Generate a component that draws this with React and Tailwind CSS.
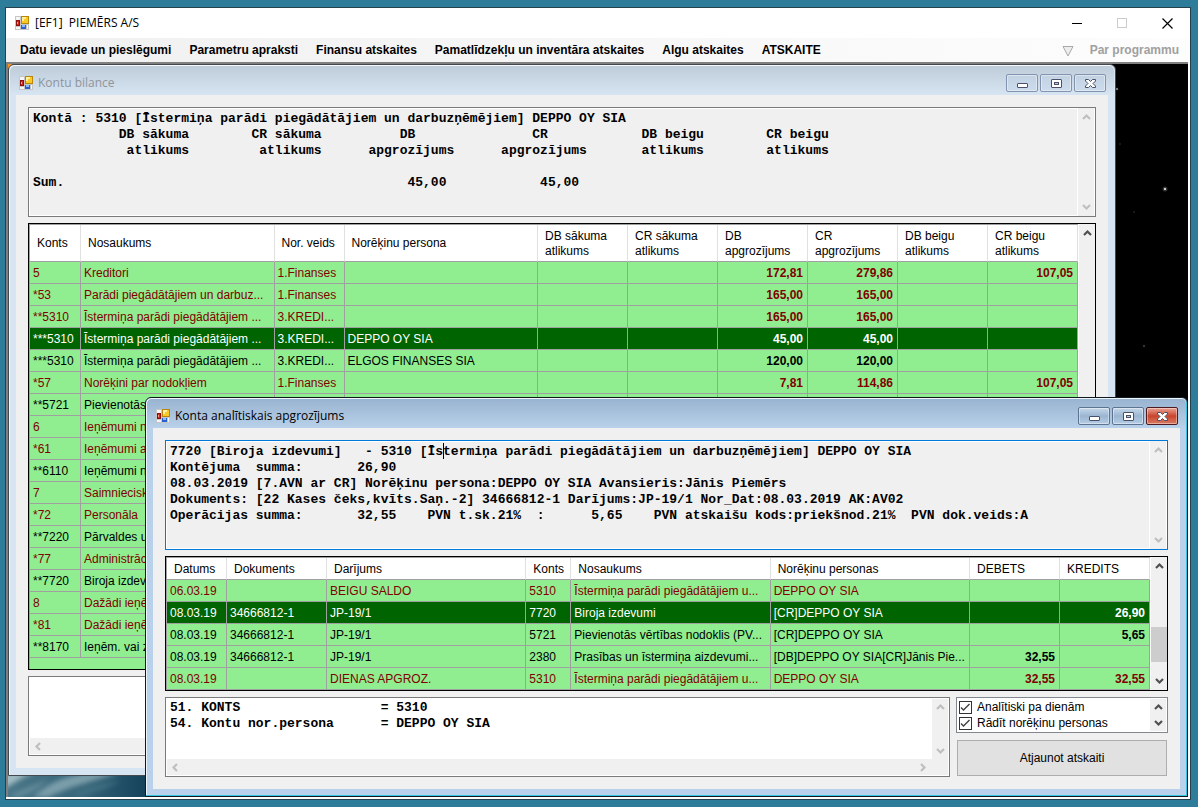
import React from 'react';

const RED = 'red';
const BLACK = 'black';
const SELECTED = 'selected';

const ROW_STYLE = {
  red:      'bg-[#90ee90] text-[#800000]',
  black:    'bg-[#90ee90] text-black',
  selected: 'bg-[#006400] text-white',
};

const MENU = [
  'Datu ievade un pieslēgumi',
  'Parametru apraksti',
  'Finansu atskaites',
  'Pamatlīdzekļu un inventāra atskaites',
  'Algu atskaites',
  'ATSKAITE',
];

const BALANCE_COLUMNS = [
  { label: 'Konts',               width: 'w-[51px]' },
  { label: 'Nosaukums',           width: '' },
  { label: 'Nor. veids',          width: 'w-[70px]' },
  { label: 'Norēķinu persona',    width: '' },
  { label: 'DB sākuma atlikums',  width: 'w-[90px]', num: true },
  { label: 'CR sākuma atlikums',  width: 'w-[90px]', num: true },
  { label: 'DB apgrozījums',      width: 'w-[90px]', num: true },
  { label: 'CR apgrozījums',      width: 'w-[90px]', num: true },
  { label: 'DB beigu atlikums',   width: 'w-[90px]', num: true },
  { label: 'CR beigu atlikums',   width: 'w-[90px]', num: true },
];

const BALANCE_ROWS = [
  { tone: RED,      cells: ['5', 'Kreditori', '1.Finanses', '', '', '', '172,81', '279,86', '', '107,05'] },
  { tone: RED,      cells: ['*53', 'Parādi piegādātājiem un darbuz...', '1.Finanses', '', '', '', '165,00', '165,00', '', ''] },
  { tone: RED,      cells: ['**5310', 'Īstermiņa parādi piegādātājiem ...', '3.KREDI...', '', '', '', '165,00', '165,00', '', ''] },
  { tone: SELECTED, cells: ['***5310', 'Īstermiņa parādi piegādātājiem ...', '3.KREDI...', 'DEPPO OY SIA', '', '', '45,00', '45,00', '', ''] },
  { tone: BLACK,    cells: ['***5310', 'Īstermiņa parādi piegādātājiem ...', '3.KREDI...', 'ELGOS FINANSES SIA', '', '', '120,00', '120,00', '', ''] },
  { tone: RED,      cells: ['*57', 'Norēķini par nodokļiem', '1.Finanses', '', '', '', '7,81', '114,86', '', '107,05'] },
  { tone: BLACK,    cells: ['**5721', 'Pievienotās', '', '', '', '', '', '', '', ''] },
  { tone: RED,      cells: ['6', 'Ieņēmumi no', '', '', '', '', '', '', '', ''] },
  { tone: RED,      cells: ['*61', 'Ieņēmumi a', '', '', '', '', '', '', '', ''] },
  { tone: BLACK,    cells: ['**6110', 'Ieņēmumi no', '', '', '', '', '', '', '', ''] },
  { tone: RED,      cells: ['7', 'Saimniecisk', '', '', '', '', '', '', '', ''] },
  { tone: RED,      cells: ['*72', 'Personāla', '', '', '', '', '', '', '', ''] },
  { tone: BLACK,    cells: ['**7220', 'Pārvaldes u', '', '', '', '', '', '', '', ''] },
  { tone: RED,      cells: ['*77', 'Administrāc', '', '', '', '', '', '', '', ''] },
  { tone: BLACK,    cells: ['**7720', 'Biroja izdev', '', '', '', '', '', '', '', ''] },
  { tone: RED,      cells: ['8', 'Dažādi ieņē', '', '', '', '', '', '', '', ''] },
  { tone: RED,      cells: ['*81', 'Dažādi ieņē', '', '', '', '', '', '', '', ''] },
  { tone: BLACK,    cells: ['**8170', 'Ieņēm. vai z', '', '', '', '', '', '', '', ''] },
];

const TURNOVER_COLUMNS = [
  { label: 'Datums',            width: 'w-[60px]' },
  { label: 'Dokuments',         width: 'w-[100px]' },
  { label: 'Darījums',          width: '' },
  { label: 'Konts',             width: 'w-[45px]' },
  { label: 'Nosaukums',         width: '' },
  { label: 'Norēķinu personas', width: '' },
  { label: 'DEBETS',            width: 'w-[90px]', num: true },
  { label: 'KREDITS',           width: 'w-[90px]', num: true },
];

const TURNOVER_ROWS = [
  { tone: RED,      cells: ['06.03.19', '', 'BEIGU SALDO', '5310', 'Īstermiņa parādi piegādātājiem u...', 'DEPPO OY SIA', '', ''] },
  { tone: SELECTED, cells: ['08.03.19', '34666812-1', 'JP-19/1', '7720', 'Biroja izdevumi', '[CR]DEPPO OY SIA', '', '26,90'] },
  { tone: BLACK,    cells: ['08.03.19', '34666812-1', 'JP-19/1', '5721', 'Pievienotās vērtības nodoklis (PV...', '[CR]DEPPO OY SIA', '', '5,65'] },
  { tone: BLACK,    cells: ['08.03.19', '34666812-1', 'JP-19/1', '2380', 'Prasības un īstermiņa aizdevumi...', '[DB]DEPPO OY SIA[CR]Jānis Pie...', '32,55', ''] },
  { tone: RED,      cells: ['08.03.19', '', 'DIENAS APGROZ.', '5310', 'Īstermiņa parādi piegādātājiem u...', 'DEPPO OY SIA', '32,55', '32,55'] },
];

// [column, text] pairs set out on one line of fixed-width text
const line = (...parts) => parts.reduce((out, [col, text]) => out.padEnd(col) + text, '');

const BALANCE_INFO = [
  'Kontā : 5310 [Īstermiņa parādi piegādātājiem un darbuzņēmējiem] DEPPO OY SIA',
  line([11, 'DB sākuma'], [28, 'CR sākuma'], [47, 'DB'], [64, 'CR'], [78, 'DB beigu'], [94, 'CR beigu']),
  line([12, 'atlikums'], [29, 'atlikums'], [43, 'apgrozījums'], [60, 'apgrozījums'], [78, 'atlikums'], [94, 'atlikums']),
  '',
  line([0, 'Sum.'], [48, '45,00'], [65, '45,00']),
].join('\n');

const TURNOVER_INFO = [
  line([0, '7720 [Biroja izdevumi]'], [25, '- 5310 [Īstermiņa parādi piegādātājiem un darbuzņēmējiem] DEPPO OY SIA']),
  line([0, 'Kontējuma  summa:'], [24, '26,90']),
  '08.03.2019 [7.AVN ar CR] Norēķinu persona:DEPPO OY SIA Avansieris:Jānis Piemērs',
  'Dokuments: [22 Kases čeks,kvīts.Saņ.-2] 34666812-1 Darījums:JP-19/1 Nor_Dat:08.03.2019 AK:AV02',
  line([0, 'Operācijas summa:'], [24, '32,55'], [33, 'PVN t.sk.21%'], [47, ':'], [54, '5,65'], [62, 'PVN atskaišu kods:priekšnod.21%'], [95, 'PVN dok.veids:A']),
].join('\n');

const FILTER_INFO = [
  line([0, '51. KONTS'], [27, '= 5310']),
  line([0, '54. Kontu nor.persona'], [27, '= DEPPO OY SIA']),
].join('\n');

function AppIcon() {
  return (
    <svg width="14" height="14" viewBox="0 0 14 14" className="shrink-0" aria-hidden="true" shapeRendering="crispEdges">
      <path d="M0 0h14v14H0z" fill="#c6c6c6" />
      <path d="M1 1h4v3H1zM1 11h4v2H1zM12 9h1v4h-1z" fill="#f6f6f6" />
      <path d="M6 0h8v8H6z" fill="#b8860b" />
      <path d="M7 1h6v6H7z" fill="#fbc926" />
      <path d="M7 1h4v2H9v2H7z" fill="#fff0a0" />
      <path d="M1 4h4v6H1z" fill="#8c1010" />
      <path d="M2 5h2v4H2z" fill="#cf2a1c" />
      <path d="M2 6h1v2H2z" fill="#f2a094" />
      <path d="M6 9h5v4H6z" fill="#2860d0" />
      <path d="M7 9h3v2H7z" fill="#8ab8ff" />
    </svg>
  );
}

const CHEVRONS = {
  up:    'M1 6 4.5 2.5 8 6',
  down:  'M1 3 4.5 6.5 8 3',
  left:  'M6 1 2.5 4.5 6 8',
  right: 'M3 1 6.5 4.5 3 8',
};

function Chevron({ dir, dim }) {
  return (
    <svg width="9" height="9" viewBox="0 0 9 9" fill="none" stroke={dim ? '#bfbfbf' : '#505050'} strokeWidth="2.2" aria-hidden="true">
      <path d={CHEVRONS[dir]} />
    </svg>
  );
}

// Vertical scroll bar, with an optional thumb near its lower end
function ScrollBar({ dim, thumb, className = 'w-4' }) {
  return (
    <div className={`flex shrink-0 flex-col items-center justify-between bg-[#f0f0f0] ${className}`}>
      <Chevron dir="up" dim={dim} />
      {thumb && <div className="mt-auto mb-[14px] h-[35px] w-full bg-[#cdcdcd]" />}
      <Chevron dir="down" dim={dim} />
    </div>
  );
}

const GLYPHS = {
  minimize: <rect x="1.5" y="5.5" width="10" height="4" rx="0.5" fill="#fff" stroke="#4a5068" />,
  restore: (
    <g fill="#fff" stroke="#4a5068">
      <rect x="1.5" y="1.5" width="10" height="8" rx="0.5" />
      <rect x="4.5" y="4.5" width="4" height="2" fill="#bcccdc" />
    </g>
  ),
  close: (
    <path
      d="M1.5 1.5h3l2 2 2-2h3V3L9 5.5 11.5 8v1.5h-3l-2-2-2 2h-3V8L4 5.5 1.5 3z"
      fill="#fff" stroke="#4a5068"
    />
  ),
};

function CaptionButton({ kind, label, active }) {
  const tone = !active
    ? 'border-[#8394b0] bg-linear-to-b from-[#c3d2e2] to-[#cddcec]'
    : kind === 'close'
      ? 'border-[#4c1a20] bg-linear-to-b from-[#e8a294] via-[#c8442c] via-50% to-[#d87a60]'
      : 'border-[#5d7390] bg-linear-to-b from-[#c6d8ea] via-[#9bb5d1] via-50% to-[#b5cde6]';
  return (
    <button
      type="button" aria-label={label}
      className={`flex h-[18px] w-8 items-center justify-center rounded-[2px] border shadow-[inset_0_0_0_1px_rgba(255,255,255,0.4)] ${tone}`}
    >
      <svg width="13" height="11" viewBox="0 0 13 11" aria-hidden="true">{GLYPHS[kind]}</svg>
    </button>
  );
}

function ChildWindow({ title, active, className, children }) {
  return (
    <section
      className={`absolute flex flex-col rounded-t-[6px] border px-[7px] pb-[7px] ${
        active
          ? 'border-[#101820] bg-[#b9d1ea] shadow-[inset_-1px_-1px_0_#35c5e0,inset_1px_1px_0_#eef5fc]'
          : 'border-[#45484d] bg-[#d7e4f2] shadow-[inset_1px_1px_0_#f4f8fc]'
      } ${className}`}
    >
      <header
        className={`-mx-[6px] mt-px flex h-[29px] shrink-0 items-start rounded-t-[5px] bg-linear-to-b pl-[9px] pr-2 ${
          active ? 'from-[#99b4d1] to-[#b9d1ea]' : 'from-[#bfcddb] to-[#d7e4f2]'
        }`}
      >
        <div className="flex h-[29px] items-center gap-[5px] pt-[5px]">
          <AppIcon />
          <h2 className={`font-['Open_Sans',sans-serif] text-[12px] leading-4 ${active ? 'text-black' : 'text-[#8f959c]'}`}>{title}</h2>
        </div>
        <div className="ml-auto flex gap-[2px] pt-2">
          <CaptionButton kind="minimize" label="Minimizēt" active={active} />
          <CaptionButton kind="restore" label="Atjaunot" active={active} />
          <CaptionButton kind="close" label="Aizvērt" active={active} />
        </div>
      </header>
      <div className="flex min-h-0 flex-1 flex-col gap-[6px] bg-[#f0f0f0] p-3">{children}</div>
    </section>
  );
}

function Memo({ label, value, className = 'px-1 pt-[3px]' }) {
  return (
    <textarea
      readOnly wrap="off" spellCheck={false} aria-label={label} defaultValue={value}
      className={`block min-w-0 flex-1 resize-none overflow-hidden font-['Liberation_Mono',monospace] text-[13px] leading-4 font-bold whitespace-pre text-black outline-none ${className}`}
    />
  );
}

function DataGrid({ columns, rows, headHeight, className, thumb }) {
  return (
    <div className={`flex border border-black bg-[#90ee90] ${className}`}>
      <div className="min-w-0 flex-1 overflow-hidden border-t border-l border-[#a0a0a0]">
        <table className="w-full table-fixed border-separate border-spacing-0 text-[12px] leading-[15px]">
          <thead>
            <tr className={headHeight}>
              {columns.map(c => (
                <th
                  key={c.label} scope="col"
                  className={`border-r border-b border-r-[#e0e0e0] border-b-[#a0a0a0] bg-white pt-px pl-[7px] text-left align-middle font-normal ${c.width}`}
                >
                  {c.label}
                </th>
              ))}
            </tr>
          </thead>
          <tbody>
            {rows.map((row, i) => (
              <tr key={i} className={`h-[22px] ${ROW_STYLE[row.tone]}`}>
                {row.cells.map((cell, j) => (
                  <td
                    key={j}
                    className={`border-r border-b border-[#a0a0a0] pt-[2px] pl-[3px] align-middle whitespace-nowrap ${columns[j].num ? 'pr-1 text-right font-bold' : ''}`}
                  >
                    {cell}
                  </td>
                ))}
              </tr>
            ))}
          </tbody>
        </table>
      </div>
      <ScrollBar thumb={thumb} className="w-[17px] border-l border-white py-[5px]" />
    </div>
  );
}

function CheckItem({ label }) {
  return (
    <label className="flex h-4 items-center gap-[5px] leading-4">
      <span className="relative flex h-[13px] w-[13px] shrink-0">
        <input type="checkbox" defaultChecked className="peer h-[13px] w-[13px] appearance-none border border-[#333] bg-white" />
        <svg width="13" height="13" viewBox="0 0 13 13" className="pointer-events-none absolute inset-0 hidden peer-checked:block" fill="none" stroke="#404040" strokeWidth="1.4" aria-hidden="true">
          <path d="M2 6.5 4.5 9l6-6" />
        </svg>
      </span>
      {label}
    </label>
  );
}

function TitleBar() {
  return (
    <header className="flex h-[30px] shrink-0 items-center bg-white pl-[9px] pr-[17px]">
      <AppIcon />
      <h1 className="ml-[6px] font-['Open_Sans',sans-serif] text-[12px] leading-4 whitespace-pre">{'[EF1]  PIEMĒRS A/S'}</h1>
      <div className="ml-auto flex gap-[34px]">
        <button type="button" aria-label="Minimizēt">
          <svg width="11" height="11" viewBox="0 0 11 11" shapeRendering="crispEdges"><path d="M0 5.5h10" stroke="#000" /></svg>
        </button>
        <button type="button" aria-label="Maksimizēt" disabled>
          <svg width="11" height="11" viewBox="0 0 11 11" shapeRendering="crispEdges"><path d="M.5.5h9v9h-9z" fill="none" stroke="#ccc" /></svg>
        </button>
        <button type="button" aria-label="Aizvērt">
          <svg width="11" height="11" viewBox="0 0 11 11"><path d="m.5.5 10 10m0-10-10 10" stroke="#000" strokeWidth="1.2" /></svg>
        </button>
      </div>
    </header>
  );
}

function MenuBar() {
  return (
    <nav className="flex h-6 shrink-0 items-center bg-linear-to-r from-[#f0f0f0] to-[#fdfdfd] pl-[14px] pr-[11px] text-[12px] leading-4 font-bold">
      <div className="flex gap-[18px]">
        {MENU.map(item => (
          <button key={item} type="button" className="whitespace-nowrap">{item}</button>
        ))}
      </div>
      <div className="ml-auto flex items-center gap-4 text-[#a0a0a0]">
        <svg width="12" height="11" viewBox="0 0 12 11" className="mt-[3px]" aria-hidden="true">
          <path d="M1 .5h10L6 10z" fill="#ededed" stroke="#a8a8a8" />
        </svg>
        <button type="button" className="whitespace-nowrap">Par programmu</button>
      </div>
    </nav>
  );
}

// Night sky with the lit edge of the planet in the lower left corner
function Wallpaper() {
  return (
    <>
      <svg className="absolute bottom-0 left-0" width="240" height="22" viewBox="0 0 240 22" aria-hidden="true">
        <defs>
          <linearGradient id="sea" x1="0" x2="1">
            <stop offset="0" stopColor="#4a7688" />
            <stop offset="0.3" stopColor="#366579" />
            <stop offset="0.6" stopColor="#123f59" />
            <stop offset="1" stopColor="#000" />
          </linearGradient>
          <filter id="soft"><feGaussianBlur stdDeviation="2.5" /></filter>
        </defs>
        <path d="M0 0h240v22H0z" fill="url(#sea)" />
        <g filter="url(#soft)">
          <path d="M-4 14C6 8 12 3 26-2H-4z" fill="#a3bcc2" />
          <path d="M24 22C36 14 46 3 78-2h34C86 6 60 12 40 22z" fill="#7c9eaa" />
          <path d="M2 20C14 16 26 10 40 4 30 14 18 20 8 22z" fill="#6a909e" />
          <path d="M62 20C76 12 92 8 112 6 98 14 82 18 72 22z" fill="#416f82" />
        </g>
      </svg>
      <svg className="absolute top-0 left-0" width="5" height="5" viewBox="0 0 5 5" aria-hidden="true">
        <path d="M0 0h5L0 5z" fill="#f7941d" />
      </svg>
      <svg className="absolute top-0 right-0" width="72" height="300" viewBox="0 0 72 300" aria-hidden="true">
        <circle cx="49" cy="125" r="2.5" fill="#333" />
        <circle cx="49" cy="125" r="1" fill="#fff" />
        <circle cx="1" cy="25" r="1.2" fill="#777" />
        <circle cx="4" cy="80" r="1" fill="#222" />
        <circle cx="18" cy="148" r="1" fill="#222" />
        <circle cx="28" cy="282" r="1.2" fill="#333" />
      </svg>
    </>
  );
}

function BalanceWindow() {
  return (
    <ChildWindow title="Kontu bilance" className="top-0 right-[72px] bottom-[21px] left-0">
      <div className="flex h-[110px] shrink-0 border border-[#7a7a7a] bg-[#f0f0f0] shadow-[inset_0_0_0_1px_#fff]">
        <Memo label="Konta kopsavilkums" value={BALANCE_INFO} />
        <ScrollBar dim className="mr-px w-[17px] border-l border-white py-[5px]" />
      </div>
      <DataGrid columns={BALANCE_COLUMNS} rows={BALANCE_ROWS} headHeight="h-[37px]" className="min-h-0 flex-1" />
      <div className="flex h-20 shrink-0 flex-col border border-[#7a7a7a] bg-white p-px">
        <Memo label="Atlases nosacījumi" value="" />
        <div className="flex h-4 items-center bg-[#f0f0f0] pl-1"><Chevron dir="left" dim /></div>
      </div>
    </ChildWindow>
  );
}

function TurnoverWindow() {
  return (
    <ChildWindow title="Konta analītiskais apgrozījums" active className="right-0 bottom-0 left-[137px] top-[333px]">
      <div className="relative flex h-[110px] shrink-0 border border-[#0078d7] bg-[#f0f0f0] shadow-[inset_0_0_0_1px_#fff]">
        <Memo label="Kontējuma dati" value={TURNOVER_INFO} />
        <ScrollBar dim className="mr-px w-[17px] border-l border-white py-[5px]" />
        <span className="absolute top-[2px] left-[277px] h-4 w-px bg-black" />
      </div>
      <DataGrid columns={TURNOVER_COLUMNS} rows={TURNOVER_ROWS} headHeight="h-[22px]" className="min-h-0 flex-1" thumb />
      <div className="flex h-20 shrink-0 gap-[6px]">
        <div className="flex min-w-0 flex-1 flex-col border border-[#7a7a7a] bg-white p-px">
          <div className="flex min-h-0 flex-1">
            <Memo label="Atlases nosacījumi" value={FILTER_INFO} className="px-[3px] pt-px" />
            <ScrollBar dim className="w-4 py-1" />
          </div>
          <div className="flex h-4 items-center justify-between bg-[#f0f0f0] pr-[21px] pl-1">
            <Chevron dir="left" dim />
            <Chevron dir="right" dim />
          </div>
        </div>
        <div className="flex w-[212px] shrink-0 flex-col justify-between text-[12px]">
          <div className="flex h-9 border border-[#828790] bg-white p-px">
            <div className="flex flex-1 flex-col pl-px">
              <CheckItem label="Analītiski pa dienām" />
              <CheckItem label="Rādīt norēķinu personas" />
            </div>
            <ScrollBar className="w-4 py-1" />
          </div>
          <button type="button" className="mx-px mb-px h-9 border border-[#adadad] bg-[#e1e1e1]">Atjaunot atskaiti</button>
        </div>
      </div>
    </ChildWindow>
  );
}

export default function App() {
  return (
    <div className="flex h-screen min-h-[640px] bg-[#2d7c9a] pt-[7px] pr-[7px] pb-[7px] pl-[5px] font-['Liberation_Sans',sans-serif] text-black">
      <div className="flex min-w-0 flex-1 flex-col border border-[#24414d] bg-white">
        <TitleBar />
        <MenuBar />
        <main className="mr-[2px] mb-[2px] flex min-h-0 flex-1 border-t-2 border-l-2 border-t-[#808080] border-l-[#808080] bg-black">
          <div className="relative min-w-0 flex-1 overflow-hidden">
            <Wallpaper />
            <BalanceWindow />
            <TurnoverWindow />
          </div>
        </main>
      </div>
    </div>
  );
}
